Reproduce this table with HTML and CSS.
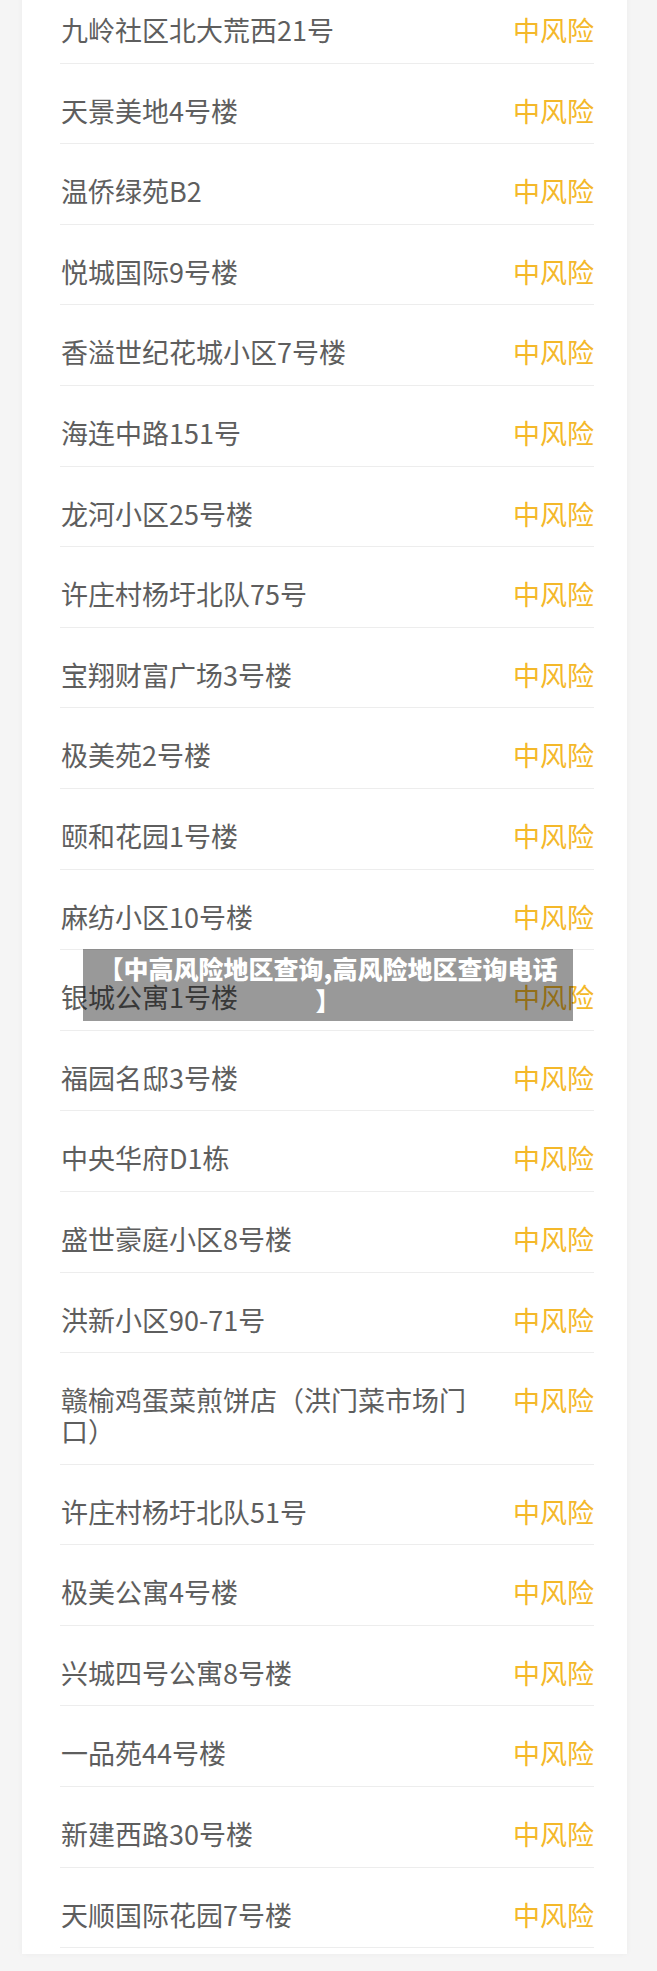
FILE: index.html
```html
<!DOCTYPE html>
<html lang="zh-CN">
<head>
  <meta charset="UTF-8" />
  <title>中高风险地区查询</title>
  <link rel="stylesheet" href="styles.css">
</head>
<body>
  <div class="card">
    <ul class="area-list">
      <li class="row"><span class="name">九岭社区北大荒西21号</span><span class="level">中风险</span></li>
      <li class="row"><span class="name">天景美地4号楼</span><span class="level">中风险</span></li>
      <li class="row"><span class="name">温侨绿苑B2</span><span class="level">中风险</span></li>
      <li class="row"><span class="name">悦城国际9号楼</span><span class="level">中风险</span></li>
      <li class="row"><span class="name">香溢世纪花城小区7号楼</span><span class="level">中风险</span></li>
      <li class="row"><span class="name">海连中路151号</span><span class="level">中风险</span></li>
      <li class="row"><span class="name">龙河小区25号楼</span><span class="level">中风险</span></li>
      <li class="row"><span class="name">许庄村杨圩北队75号</span><span class="level">中风险</span></li>
      <li class="row"><span class="name">宝翔财富广场3号楼</span><span class="level">中风险</span></li>
      <li class="row"><span class="name">极美苑2号楼</span><span class="level">中风险</span></li>
      <li class="row"><span class="name">颐和花园1号楼</span><span class="level">中风险</span></li>
      <li class="row"><span class="name">麻纺小区10号楼</span><span class="level">中风险</span></li>
      <li class="row"><span class="name">银城公寓1号楼</span><span class="level">中风险</span></li>
      <li class="row"><span class="name">福园名邸3号楼</span><span class="level">中风险</span></li>
      <li class="row"><span class="name">中央华府D1栋</span><span class="level">中风险</span></li>
      <li class="row"><span class="name">盛世豪庭小区8号楼</span><span class="level">中风险</span></li>
      <li class="row"><span class="name">洪新小区90-71号</span><span class="level">中风险</span></li>
      <li class="row"><span class="name">赣榆鸡蛋菜煎饼店（洪门菜市场门口）</span><span class="level">中风险</span></li>
      <li class="row"><span class="name">许庄村杨圩北队51号</span><span class="level">中风险</span></li>
      <li class="row"><span class="name">极美公寓4号楼</span><span class="level">中风险</span></li>
      <li class="row"><span class="name">兴城四号公寓8号楼</span><span class="level">中风险</span></li>
      <li class="row"><span class="name">一品苑44号楼</span><span class="level">中风险</span></li>
      <li class="row"><span class="name">新建西路30号楼</span><span class="level">中风险</span></li>
      <li class="row"><span class="name">天顺国际花园7号楼</span><span class="level">中风险</span></li>
    </ul>
  </div>

  <div class="caption">【中高风险地区查询,高风险地区查询电话<br>】</div>
</body>
</html>
```

FILE: styles.css
```css
body {
  font-family: "Noto Sans CJK SC", "Noto Sans", sans-serif;
  background: #f5f5f5;
  margin: 0;
  height: 1971px;
  overflow: hidden;
  position: relative;
}

.card {
  margin-left: 22px;
  width: 605px;
  height: 1971px;
  background: #fff;
  box-shadow: 0 0 6px rgba(0, 0, 0, 0.04);
}

.area-list {
  list-style: none;
  margin: -17px 0 0;
  padding: 0 33px 0 38px;
}

.row {
  display: flex;
  justify-content: space-between;
  align-items: flex-start;
  gap: 30px;
  padding: 31px 0 17.6px 1px;
  border-bottom: 1px solid #ededed;
  font-size: 27px;
  line-height: 31px;
}

.name {
  flex: 1;
  color: #5e5e5e;
}

.level {
  flex: none;
  color: #f4b82a;
}

.caption {
  position: absolute;
  top: 949px;
  left: 83px;
  width: 480px;
  padding: 3px 5px 5px;
  background: rgba(0, 0, 0, 0.4);
  color: #fff;
  font-size: 25px;
  font-weight: 900;
  line-height: 32px;
  text-align: center;
}
```
